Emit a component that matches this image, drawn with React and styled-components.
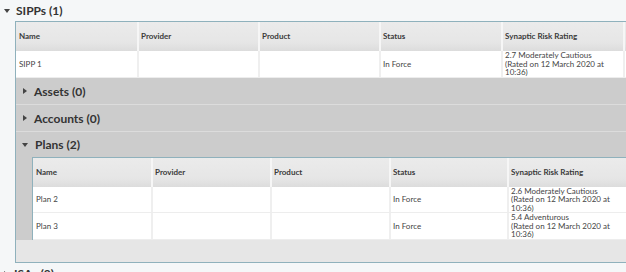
import React from 'react';
import styled, { createGlobalStyle } from 'styled-components';

const GlobalStyle = createGlobalStyle`
  html, body {
    margin: 0;
    padding: 0;
    background: #f5f7f8;
    font-family: Lato, "Open Sans", sans-serif;
    color: #333;
    overflow: hidden;
  }
`

const Page = styled.div`
  width: 626px;
  height: 272px;
  overflow: hidden;
`
const Section = styled.section`
  display: flex;
  flex-direction: column;
`
const Title = styled.div`
  display: flex;
  align-items: center;
  height: ${p => p.$h || 21}px;
  padding-left: ${p => p.$indent || 4}px;
  gap: ${p => p.$gap || 6}px;
  font-size: 12px;
  font-weight: 700;
  color: #333;
  white-space: nowrap;
  box-sizing: border-box;
`
const Arrow = styled.span`
  width: 0;
  height: 0;
  border-style: solid;
  ${p => p.$open
    ? 'border-width: 4px 3px 0 3px; border-color: #444 transparent transparent transparent;'
    : 'border-width: 3px 0 3px 4px; border-color: transparent transparent transparent #444;'}
`
const Grid = styled.div`
  margin-left: ${p => p.$left}px;
  width: 720px;
  border: 1px solid #8fb1bc;
  border-right: none;
  ${p => p.$nested && 'border-bottom: none;'}
  display: flex;
  flex-direction: column;
`
const Row = styled.div`
  display: grid;
  grid-template-columns: ${p => p.$cols};
  height: ${p => p.$h}px;
  background: ${p => p.$head ? 'linear-gradient(#ebebeb, #e6e6e6 70%, #dcdcdc)' : '#fff'};
  border-bottom: ${p => p.$head ? 'none' : '1px solid #ededed'};
  box-sizing: border-box;
`
const Cell = styled.div`
  display: flex;
  align-items: center;
  padding-left: ${p => p.$first ? 3 : 2}px;
  font-size: 8px;
  line-height: 8.5px;
  font-weight: ${p => p.$head ? 700 : 400};
  color: ${p => p.$head ? '#3a3a3a' : '#444'};
  border-left: ${p => p.$first ? 'none' : p.$head ? '2px solid #f6f6f6' : '2px solid #efefef'};
  white-space: pre-line;
  overflow: hidden;
`
const Detail = styled.div`
  background: #cccccc;
  display: flex;
  flex-direction: column;
`
const DetailTitle = styled(Title)`
  border-bottom: ${p => p.$line ? '1px solid #dcdcdc' : 'none'};
`
const Footer = styled.div`
  height: 22px;
  background: #e6e6e6;
`

const outerCols = '121px 121px 121px 122px 122px 110px';
const innerCols = '118px 119px 119px 118px 119px 110px';
const headers = ['Name', 'Provider', 'Product', 'Status', 'Synaptic Risk Rating', ''];

const HeaderRow = ({ cols }) => (
  <Row $head $cols={cols} $h={29}>
    {headers.map((h, i) => <Cell key={i} $head $first={i === 0}>{h}</Cell>)}
  </Row>
)

const DataRow = ({ cols, h, cells }) => (
  <Row $cols={cols} $h={h}>
    {cells.map((c, i) => <Cell key={i} $first={i === 0}>{c}</Cell>)}
  </Row>
)

const rating = (s) => `${s}\n(Rated on 12 March 2020 at\n10:36)`;

export default function App() {
  return (
    <Page>
      <GlobalStyle />
      <Section>
        <Title><Arrow $open />SIPPs (1)</Title>
        <Grid $left={15}>
          <HeaderRow cols={outerCols} />
          <DataRow cols={outerCols} h={27}
            cells={['SIPP 1', '', '', 'In Force', rating('2.7 Moderately Cautious'), '']} />
          <Detail>
            <DetailTitle $h={27} $indent={7} $gap={7} $line><Arrow />Assets (0)</DetailTitle>
            <DetailTitle $h={27} $indent={7} $gap={7} $line><Arrow />Accounts (0)</DetailTitle>
            <DetailTitle $h={25} $indent={6} $gap={7}><Arrow $open />Plans (2)</DetailTitle>
            <Grid $left={16} $nested>
              <HeaderRow cols={innerCols} />
              <DataRow cols={innerCols} h={26}
                cells={['Plan 2', '', '', 'In Force', rating('2.6 Moderately Cautious'), '']} />
              <DataRow cols={innerCols} h={27}
                cells={['Plan 3', '', '', 'In Force', rating('5.4 Adventurous'), '']} />
            </Grid>
          </Detail>
          <Footer />
        </Grid>
      </Section>
      <Section>
        <Title><Arrow />ISAs (0)</Title>
      </Section>
    </Page>
  );
}
